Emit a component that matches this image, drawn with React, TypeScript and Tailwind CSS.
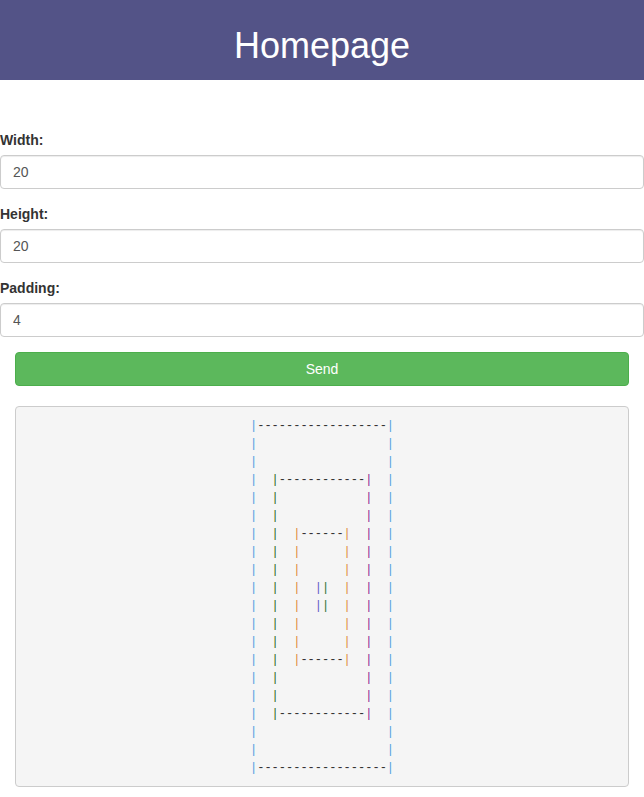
import React from 'react';

const SIZE = 20;
const STEP = 3;

// full class names per rectangle level: [left, right]
const barColors: [string, string][] = [
  ['text-[#4d9fe0]', 'text-[#4d9fe0]'],
  ['text-[#2b6a1c]', 'text-[#8a2493]'],
  ['text-[#e08a3c]', 'text-[#e08a3c]'],
  ['text-[#5b55c8]', 'text-[#2a7034]'],
];

type Cell = { ch: string; cls: string };

function buildArt(): Cell[][] {
  const rows: Cell[][] = [];
  for (let r = 0; r < SIZE; r++) {
    const row: Cell[] = [];
    for (let c = 0; c < SIZE; c++) {
      let cell: Cell = { ch: ' ', cls: '' };
      for (let k = 0; k < barColors.length; k++) {
        const lo = k * STEP;
        const hi = SIZE - 1 - k * STEP;
        if (lo > hi) break;
        if (r >= lo && r <= hi && (c === lo || c === hi)) {
          cell = { ch: '|', cls: c === lo ? barColors[k][0] : barColors[k][1] };
        } else if ((r === lo || r === hi) && c > lo && c < hi) {
          cell = { ch: '-', cls: 'text-[#333]' };
        }
      }
      row.push(cell);
    }
    rows.push(row);
  }
  return rows;
}

function Field({ label, value }: { label: string; value: string }) {
  return (
    <div className="mb-[15px]">
      <label className="block mb-[5px] text-sm leading-5 font-bold text-[#333]">{label}</label>
      <input
        defaultValue={value}
        className="block w-full h-[34px] px-3 text-sm text-[#555] bg-white border border-[#ccc] rounded-[4px] shadow-[inset_0_1px_1px_rgba(0,0,0,0.075)] outline-none"
      />
    </div>
  );
}

export default function App() {
  const art = buildArt();

  return (
    <div className="min-h-screen bg-white font-['Liberation_Sans',Arial,sans-serif]">
      <header className="h-20 bg-[#535387] flex items-center justify-center">
        <h1 className="text-4xl text-white leading-none pt-[12px]">Homepage</h1>
      </header>

      <form className="pt-[50px]" onSubmit={(e) => e.preventDefault()}>
        <Field label="Width:" value="20" />
        <Field label="Height:" value="20" />
        <Field label="Padding:" value="4" />

        <div className="px-[15px]">
          <button
            type="submit"
            className="block w-full h-[34px] text-sm text-white bg-[#5cb85c] border border-[#4cae4c] rounded-[4px]"
          >
            Send
          </button>

          <pre className="mt-5 mb-[10px] p-[9.5px] bg-[#f5f5f5] border border-[#ccc] rounded-[4px] text-center text-[12px] leading-[18px] font-['Liberation_Mono',monospace]">
            {art.map((row, r) => (
              <div key={r}>
                {row.map((cell, c) => (
                  <span key={c} className={cell.cls}>
                    {cell.ch}
                  </span>
                ))}
              </div>
            ))}
          </pre>
        </div>
      </form>
    </div>
  );
}
